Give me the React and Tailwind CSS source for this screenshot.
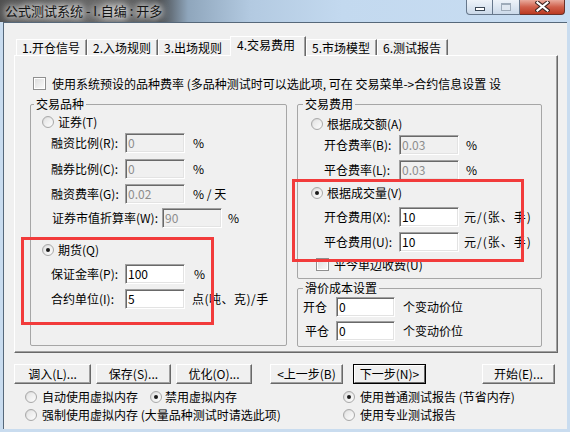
import React from 'react'

function Radio({ checked }) {
    return (
        <span className="flex h-[12px] w-[12px] shrink-0 items-center justify-center rounded-full border border-[#a9a9a9] bg-[linear-gradient(135deg,#d4d4d4,#ffffff)]">
            <span className="flex h-[8px] w-[8px] items-center justify-center rounded-full bg-[linear-gradient(135deg,#e4e4e4,#fbfbfb)]">
                {checked && <span className="h-[4px] w-[4px] rounded-full bg-[#1b1b1b]" />}
            </span>
        </span>
    )
}

function Check() {
    return (
        <span className="flex h-[13px] w-[13px] shrink-0 items-center justify-center border border-[#8f8f8f] bg-white">
            <span className="h-[9px] w-[9px] bg-[linear-gradient(135deg,#dedede,#f9f9f9)]" />
        </span>
    )
}

function Field({ value, disabled, className = 'w-[60px]' }) {
    return (
        <div className={`h-[20px] shrink-0 border border-t-[#a0a0a0] border-l-[#a0a0a0] border-r-white border-b-white pl-[2px] pt-[1px] leading-[15px] shadow-[inset_1px_1px_0_#696969,inset_-1px_-1px_0_#e3e3e3] ${disabled ? 'bg-[#f0f0f0] text-[#8d8d8d]' : 'bg-white text-black'} ${className}`}>
            {value}
        </div>
    )
}

function FieldRow({ className, labelClass, label, value, disabled, unit, unitClass, fieldClass }) {
    return (
        <div className={`flex h-[20px] items-center ${className}`}>
            <span className={`shrink-0 whitespace-nowrap ${labelClass}`}>{label}</span>
            <Field value={value} disabled={disabled} className={fieldClass} />
            <span className={`whitespace-nowrap ${unitClass}`}>{unit}</span>
        </div>
    )
}

function Btn({ children, className }) {
    return (
        <div className={`flex h-[20px] shrink-0 items-center justify-center whitespace-nowrap border border-t-white border-l-white border-r-[#696969] border-b-[#696969] bg-[#f0f0f0] shadow-[inset_-1px_-1px_0_#a0a0a0] ${className}`}>
            {children}
        </div>
    )
}

function Tab({ children, active }) {
    if (active) {
        return (
            <div className="z-10 -mb-[1px] flex h-[20px] w-[76px] shrink-0 items-start border-l border-t border-r border-l-white border-t-white border-r-[#696969] bg-[#f0f0f0] pl-[6px] pt-[1px] leading-[14px] shadow-[inset_-1px_0_0_#a0a0a0]">
                {children}
            </div>
        )
    }
    return (
        <div className="flex h-[16px] w-[71px] shrink-0 items-center self-end border-l border-t border-r border-l-white border-t-white border-r-[#696969] pl-[5px] leading-[14px] shadow-[inset_-1px_0_0_#a0a0a0]">
            {children}
        </div>
    )
}

export default function App() {
    return (
        <div className="flex h-[432px] w-[570px] flex-col overflow-hidden bg-[#c9dcef] font-['Noto_Sans_CJK_SC',sans-serif] text-[12px] text-black">
            {/* 标题栏 */}
            <div className="flex h-[22px] shrink-0 bg-[linear-gradient(90deg,#4f4f4f_0%,#6a6a6a_20%,#4a4d50_28%,#8fa6bc_33%,#b3cae1_44%,#c3d9ef_60%,#c8ddf2_100%)]">
                <span className="ml-[5px] mt-[2px] whitespace-nowrap text-[13px] leading-[17px] text-[#141414] [text-shadow:0_0_6px_#ffffff,0_0_9px_#ffffff,0_0_12px_#e8e8e8]">
                    公式测试系统 - I.自编 : 开多
                </span>
                <div className="ml-auto mr-[5px] flex h-[15px]">
                    <div className="flex w-[27px] items-end justify-center rounded-bl-[4px] border border-t-0 border-[#66778b] bg-[linear-gradient(#eef3f9,#cbd9e9)] pb-[3px]">
                        <span className="h-[4px] w-[10px] border border-[#3b4856] bg-white" />
                    </div>
                    <div className="flex w-[27px] items-center justify-center border-b border-r border-[#66778b] bg-[linear-gradient(#eef3f9,#cbd9e9)]">
                        <span className="h-[8px] w-[10px] border border-[#9eabb9] border-t-2 bg-[#dfe7f0]" />
                    </div>
                    <div className="flex w-[45px] items-start justify-center rounded-br-[4px] border-b border-r border-[#6a3129] bg-[linear-gradient(#e9ab9d,#d0604b_50%,#bb3a22)] pt-[1px]">
                        <svg width="15" height="11" viewBox="0 0 15 11">
                            <path d="M2.5 1.5 L12.5 9.5 M12.5 1.5 L2.5 9.5" stroke="#3a2320" strokeWidth="4.2" strokeLinecap="square" fill="none" />
                            <path d="M2.5 1.5 L12.5 9.5 M12.5 1.5 L2.5 9.5" stroke="#ffffff" strokeWidth="2.2" strokeLinecap="square" fill="none" />
                        </svg>
                    </div>
                </div>
            </div>

            {/* 客户区 */}
            <div className="mb-[3px] ml-[3px] mr-[3px] flex flex-1 flex-col border-l border-t border-[#56687a] bg-[#f0f0f0]">
                {/* 页签 */}
                <div className="ml-[12px] mt-[13px] flex h-[19px]">
                    <Tab>1.开仓信号</Tab>
                    <Tab>2.入场规则</Tab>
                    <div className="flex h-[16px] w-[72px] shrink-0 items-center self-end border-l border-t border-l-white border-t-white pl-[5px] leading-[14px]">3.出场规则</div>
                    <Tab active>4.交易费用</Tab>
                    <Tab>5.市场模型</Tab>
                    <Tab>6.测试报告</Tab>
                </div>

                {/* 页签内容 */}
                <div className="relative ml-[10px] h-[298px] w-[544px] border border-t-white border-l-white border-r-[#696969] border-b-[#696969] shadow-[inset_-1px_-1px_0_#a0a0a0]">
                    <div className="ml-[18px] mt-[21px] flex h-[13px] items-center">
                        <Check />
                        <span className="ml-[6px] whitespace-nowrap leading-[13px]">
                            使用系统预设的品种费率 (多品种测试时可以选此项, 可在 交易菜单-&gt;合约信息设置 设
                        </span>
                    </div>

                    <div className="ml-[15px] mt-[7px] flex">
                        {/* 交易品种 */}
                        <fieldset className="h-[249px] w-[257px] shrink-0 rounded-[2px] border border-[#a6a6a6]">
                            <legend className="ml-[3px] px-[2px] leading-[14px]">交易品种</legend>
                            <div className="mt-[3px] flex h-[16px] items-center pl-[11px]">
                                <Radio />
                                <span className="ml-[4px]">证券(T)</span>
                            </div>
                            <FieldRow className="mt-[3px] pl-[20px]" labelClass="w-[74px]" label="融资比例(R):" value="0" disabled unit="%" unitClass="ml-[8px]" />
                            <FieldRow className="mt-[6px] pl-[20px]" labelClass="w-[74px]" label="融券比例(C):" value="0" disabled unit="%" unitClass="ml-[8px]" />
                            <FieldRow className="mt-[5px] pl-[20px]" labelClass="w-[74px]" label="融资费率(G):" value="0.02" disabled unit="% / 天" unitClass="ml-[8px]" />
                            <FieldRow className="mt-[4px] pl-[21px]" labelClass="w-[110px]" label="证券市值折算率(W):" value="90" disabled unit="%" unitClass="ml-[6px]" />
                            <div className="mt-[14px] flex h-[16px] items-center pl-[11px]">
                                <Radio checked />
                                <span className="ml-[4px]">期货(Q)</span>
                            </div>
                            <FieldRow className="mt-[6px] pl-[20px]" labelClass="w-[74px]" label="保证金率(P):" value="100" unit="%" unitClass="ml-[9px]" />
                            <FieldRow className="mt-[5px] pl-[20px]" labelClass="w-[74px]" label="合约单位(I):" value="5" unit="点(吨、克)/手" unitClass="ml-[7px] tracking-[0.5px]" />
                        </fieldset>

                        <div className="ml-[10px] flex w-[245px] flex-col">
                            {/* 交易费用 */}
                            <fieldset className="h-[182px] w-[245px] rounded-[2px] border border-[#a6a6a6]">
                                <legend className="ml-[5px] px-[2px] leading-[14px]">交易费用</legend>
                                <div className="mt-[5px] flex h-[16px] items-center pl-[13px]">
                                    <Radio />
                                    <span className="ml-[4px]">根据成交额(A)</span>
                                </div>
                                <FieldRow className="mt-[3px] pl-[26px]" labelClass="w-[75px]" label="开仓费率(B):" value="0.03" disabled unit="%" unitClass="ml-[7px]" />
                                <FieldRow className="mt-[5px] pl-[26px]" labelClass="w-[75px]" label="平仓费率(L):" value="0.03" disabled unit="%" unitClass="ml-[7px]" />
                                <div className="mt-[5px] flex h-[16px] items-center pl-[13px]">
                                    <Radio checked />
                                    <span className="ml-[4px]">根据成交量(V)</span>
                                </div>
                                <FieldRow className="mt-[6px] pl-[26px]" labelClass="w-[75px]" label="开仓费用(X):" value="10" unit="元/(张、手)" unitClass="ml-[5px] tracking-[1px]" />
                                <FieldRow className="mt-[5px] pl-[26px]" labelClass="w-[75px]" label="平仓费用(U):" value="10" unit="元/(张、手)" unitClass="ml-[5px] tracking-[1px]" />
                                <div className="mt-[6px] flex h-[13px] items-center pl-[18px]">
                                    <Check />
                                    <span className="ml-[5px] leading-[13px]">平今单边收费(U)</span>
                                </div>
                            </fieldset>

                            {/* 滑价成本设置 */}
                            <fieldset className="mt-[2px] h-[66px] w-[245px] rounded-[2px] border border-[#a6a6a6]">
                                <legend className="ml-[5px] px-[2px] leading-[14px]">滑价成本设置</legend>
                                <FieldRow className="mt-[2px] pl-[5px]" labelClass="w-[33px]" label="开仓" value="0" fieldClass="w-[59px]" unit="个变动价位" unitClass="ml-[8px]" />
                                <FieldRow className="mt-[4px] pl-[7px]" labelClass="w-[31px]" label="平仓" value="0" fieldClass="w-[59px]" unit="个变动价位" unitClass="ml-[8px]" />
                            </fieldset>
                        </div>
                    </div>

                    {/* 标注框 */}
                    <div className="pointer-events-none absolute left-[6px] top-[181px] h-[88px] w-[193px] border-[3px] border-[#f23b3b]" />
                    <div className="pointer-events-none absolute left-[277px] top-[123px] h-[83px] w-[232px] border-[3px] border-[#f23b3b]" />
                </div>

                {/* 按钮 */}
                <div className="ml-[10px] mt-[11px] flex">
                    <Btn className="w-[77px]">调入(L)...</Btn>
                    <Btn className="ml-[5px] w-[75px]">保存(S)...</Btn>
                    <Btn className="ml-[5px] w-[76px]">优化(O)...</Btn>
                    <Btn className="ml-[18px] w-[73px]">&lt;上一步(B)</Btn>
                    <div className="ml-[10px] flex h-[20px] w-[73px] shrink-0 border border-black">
                        <div className="flex flex-1 items-center justify-center whitespace-nowrap border border-t-white border-l-white border-r-[#696969] border-b-[#696969] bg-[#f0f0f0]">
                            下一步(N)&gt;
                        </div>
                    </div>
                    <Btn className="ml-[56px] w-[73px]">开始(E)...</Btn>
                </div>

                {/* 选项 */}
                <div className="mt-[6px] flex">
                    <div className="flex w-[339px] shrink-0 flex-col">
                        <div className="ml-[21px] flex h-[14px] items-center">
                            <Radio />
                            <span className="ml-[5px] whitespace-nowrap">自动使用虚拟内存</span>
                            <span className="ml-[12px]"><Radio checked /></span>
                            <span className="ml-[3px] whitespace-nowrap">禁用虚拟内存</span>
                        </div>
                        <div className="ml-[21px] mt-[4px] flex h-[14px] items-center">
                            <Radio />
                            <span className="ml-[5px] whitespace-nowrap">强制使用虚拟内存 (大量品种测试时请选此项)</span>
                        </div>
                    </div>
                    <div className="flex flex-col">
                        <div className="flex h-[14px] items-center">
                            <Radio checked />
                            <span className="ml-[5px] whitespace-nowrap">使用普通测试报告 (节省内存)</span>
                        </div>
                        <div className="mt-[4px] flex h-[14px] items-center">
                            <Radio />
                            <span className="ml-[5px] whitespace-nowrap">使用专业测试报告</span>
                        </div>
                    </div>
                </div>
            </div>
        </div>
    )
}
